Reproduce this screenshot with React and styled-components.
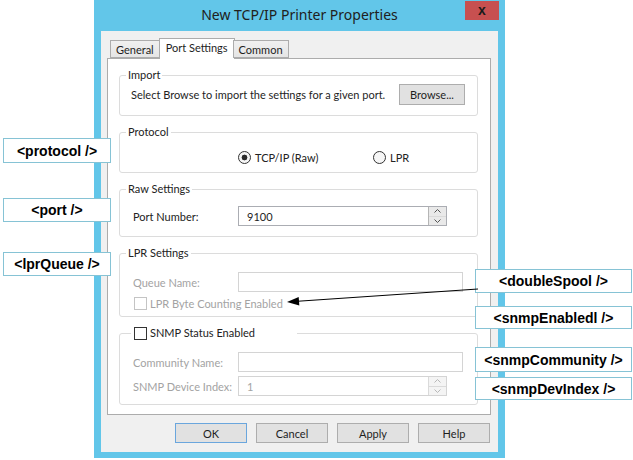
import React from 'react';
import styled, { createGlobalStyle } from 'styled-components';

const GlobalStyle = createGlobalStyle`
  html, body {
    margin: 0;
    padding: 0;
    background: #ffffff;
  }
  body {
    font-family: Lato, 'Noto Sans', sans-serif;
    font-size: 11px;
    color: #1e1e1e;
  }
`;

const Canvas = styled.div`
  position: relative;
  width: 633px;
  height: 460px;
  overflow: hidden;
`;

const Window = styled.div`
  margin-left: 94px;
  width: 411px;
  height: 458px;
  box-sizing: border-box;
  padding: 0 7px 6px;
  background: #62c6e9;
  display: flex;
  flex-direction: column;
`;

const TitleBar = styled.div`
  height: 31px;
  flex: none;
  display: grid;
  grid-template-columns: 1fr auto 1fr;
  align-items: center;
`;

const Title = styled.div`
  grid-column: 2;
  font-family: 'Noto Sans', sans-serif;
  font-size: 14px;
  color: #202020;
  margin-top: -2px;
`;

const CloseButton = styled.div`
  grid-column: 3;
  justify-self: end;
  align-self: start;
  width: 34px;
  height: 19px;
  margin: 1px -1px 0 0;
  background: #c75050;
  display: flex;
  align-items: center;
  justify-content: center;
  font-family: 'Liberation Sans', sans-serif;
  font-weight: bold;
  font-size: 14px;
  color: #1a1a1a;
  line-height: 1;
  padding-bottom: 2px;
  box-sizing: border-box;
`;

const Client = styled.div`
  flex: 1;
  background: #f0f0f0;
  display: flex;
  flex-direction: column;
`;

const TabStrip = styled.div`
  display: flex;
  align-items: flex-end;
  height: 21px;
  margin: 7px 0 -1px 9px;
  position: relative;
  z-index: 1;
`;

const Tab = styled.div`
  box-sizing: border-box;
  height: ${(p) => (p.$active ? 21 : 18)}px;
  margin: ${(p) => (p.$active ? '0 -1px 0 0' : '0 0 1px 0')};
  padding: ${(p) => (p.$active ? '2px 6px 0' : '1px 5px 0')};
  border: 1px solid #acacac;
  border-bottom: ${(p) => (p.$active ? 'none' : '1px solid #acacac')};
  background: ${(p) => (p.$active ? '#ffffff' : 'linear-gradient(#f0f0f0, #e5e5e5)')};
  display: flex;
  align-items: ${(p) => (p.$active ? 'flex-start' : 'center')};
  white-space: nowrap;
  & + & {
    margin-left: -1px;
  }
`;

const Panel = styled.div`
  margin: 0 7px 0 6px;
  height: 357px;
  box-sizing: border-box;
  border: 1px solid #acacac;
  background: #ffffff;
  padding: 8px 12px 9px 11px;
  display: flex;
  flex-direction: column;
  gap: 8px;
`;

const Group = styled.fieldset`
  margin: 0;
  min-width: 0;
  padding: ${(p) => p.$pt}px 0 ${(p) => p.$pb}px;
  border: 1px solid #dcdcdc;
  border-radius: 3px;
`;

const Legend = styled.legend`
  margin-left: ${(p) => p.$offset || 6}px;
  padding: ${(p) => p.$pad || '0 2px'};
  line-height: 16px;
  color: #222;
  display: flex;
  align-items: center;
`;

const ImportRow = styled.div`
  height: 21px;
  display: flex;
  align-items: center;
  justify-content: space-between;
  padding: 0 12px 0 11px;
  white-space: nowrap;
`;

const RadioRow = styled.div`
  height: 18px;
  display: grid;
  grid-template-columns: 135px auto;
  align-items: center;
  padding-left: 118px;
`;

const Option = styled.label`
  display: flex;
  align-items: center;
  gap: 4px;
  color: #222;
`;

const RadioDot = styled.span`
  width: 13px;
  height: 13px;
  box-sizing: border-box;
  border-radius: 50%;
  border: 1px solid #333;
  background: ${(p) =>
    p.$checked ? 'radial-gradient(circle, #2b2b2b 0 2.6px, #f6f6f6 3.2px)' : '#f6f6f6'};
`;

const FieldRow = styled.div`
  height: 20px;
  display: grid;
  grid-template-columns: 105px ${(p) => p.$width}px;
  align-items: center;
  padding-left: 13px;
  margin-top: ${(p) => p.$mt || 0}px;
  white-space: nowrap;
  color: ${(p) => (p.$disabled ? '#a3a3a3' : '#222')};
`;

const InputBox = styled.div`
  height: 20px;
  box-sizing: border-box;
  border: 1px solid ${(p) => (p.$disabled ? '#d4d4d4' : '#abadb3')};
  background: #ffffff;
  display: flex;
  align-items: stretch;
`;

const InputText = styled.span`
  flex: 1;
  padding-left: 8px;
  display: flex;
  align-items: center;
  color: ${(p) => (p.$disabled ? '#a3a3a3' : '#1e1e1e')};
`;

const Spinner = styled.div`
  width: 17px;
  display: flex;
  flex-direction: column;
  border-left: 1px solid ${(p) => (p.$disabled ? '#dadada' : '#b5b5b5')};
`;

const SpinHalf = styled.div`
  flex: 1;
  background: ${(p) => (p.$disabled ? '#f4f4f4' : '#e9e9e9')};
  display: flex;
  align-items: center;
  justify-content: center;
  & + & {
    border-top: 1px solid ${(p) => (p.$disabled ? '#dadada' : '#b5b5b5')};
  }
`;

const CheckRow = styled.label`
  height: 16px;
  margin-top: 3px;
  padding-left: 14px;
  display: flex;
  align-items: center;
  gap: 3px;
  color: ${(p) => (p.$disabled ? '#a3a3a3' : '#222')};
`;

const CheckBox = styled.span`
  width: 13px;
  height: 13px;
  box-sizing: border-box;
  border: 1px solid ${(p) => (p.$disabled ? '#c4c4c4' : '#333')};
  background: #ffffff;
`;

const Button = styled.div`
  width: ${(p) => p.$width || 72}px;
  height: ${(p) => p.$height || 20}px;
  box-sizing: border-box;
  border: 1px solid ${(p) => (p.$default ? '#6aa6dd' : '#adadad')};
  background: #e1e1e1;
  display: flex;
  align-items: center;
  justify-content: center;
  color: #1e1e1e;
`;

const ButtonBar = styled.div`
  display: flex;
  justify-content: flex-end;
  gap: 9px;
  margin: 8px 8px 0 0;
`;

const Note = styled.div`
  position: absolute;
  box-sizing: border-box;
  border: 1px solid #86c3d5;
  background: #ffffff;
  display: flex;
  align-items: center;
  justify-content: center;
  font-family: 'Liberation Sans', Arial, sans-serif;
  font-weight: bold;
  font-size: 14px;
  color: #000;
  white-space: nowrap;
`;

const Overlay = styled.svg`
  position: absolute;
  left: 0;
  top: 0;
  pointer-events: none;
`;

const notes = [
  { text: '<protocol />', x: 3, y: 138, w: 108, h: 25 },
  { text: '<port />', x: 3, y: 198, w: 108, h: 24 },
  { text: '<lprQueue />', x: 3, y: 252, w: 108, h: 24 },
  { text: '<doubleSpool />', x: 475, y: 269, w: 157, h: 24 },
  { text: '<snmpEnabledl />', x: 475, y: 306, w: 157, h: 23 },
  { text: '<snmpCommunity />', x: 475, y: 347, w: 157, h: 25 },
  { text: '<snmpDevIndex />', x: 475, y: 377, w: 157, h: 23 },
];

function Chevron({ up, disabled }) {
  return (
    <svg width="7" height="4" viewBox="0 0 7 4">
      <path
        d={up ? 'M0.5 3.5 L3.5 0.5 L6.5 3.5' : 'M0.5 0.5 L3.5 3.5 L6.5 0.5'}
        fill="none"
        stroke={disabled ? '#b8b8b8' : '#555'}
        strokeWidth="1"
      />
    </svg>
  );
}

function SpinInput({ value, disabled }) {
  return (
    <InputBox $disabled={disabled}>
      <InputText $disabled={disabled}>{value}</InputText>
      <Spinner $disabled={disabled}>
        <SpinHalf $disabled={disabled}>
          <Chevron up disabled={disabled} />
        </SpinHalf>
        <SpinHalf $disabled={disabled}>
          <Chevron disabled={disabled} />
        </SpinHalf>
      </Spinner>
    </InputBox>
  );
}

export default function App() {
  return (
    <Canvas>
      <GlobalStyle />
      <Window>
        <TitleBar>
          <Title>New TCP/IP Printer Properties</Title>
          <CloseButton>x</CloseButton>
        </TitleBar>
        <Client>
          <TabStrip>
            <Tab>General</Tab>
            <Tab $active>Port Settings</Tab>
            <Tab>Common</Tab>
          </TabStrip>
          <Panel>
            <Group $pt={1} $pb={10}>
              <Legend>Import</Legend>
              <ImportRow>
                <span>Select Browse to import the settings for a given port.</span>
                <Button $width={66} $height={21}>Browse...</Button>
              </ImportRow>
            </Group>

            <Group $pt={8} $pb={6}>
              <Legend>Protocol</Legend>
              <RadioRow>
                <Option>
                  <RadioDot $checked />
                  TCP/IP (Raw)
                </Option>
                <Option>
                  <RadioDot />
                  LPR
                </Option>
              </RadioRow>
            </Group>

            <Group $pt={9} $pb={10}>
              <Legend>Raw Settings</Legend>
              <FieldRow $width={209}>
                <span>Port Number:</span>
                <SpinInput value="9100" />
              </FieldRow>
            </Group>

            <Group $pt={11} $pb={5}>
              <Legend>LPR Settings</Legend>
              <FieldRow $width={225} $disabled>
                <span>Queue Name:</span>
                <InputBox $disabled />
              </FieldRow>
              <CheckRow $disabled>
                <CheckBox $disabled />
                LPR Byte Counting Enabled
              </CheckRow>
            </Group>

            <Group $pt={11} $pb={8}>
              <Legend $offset={11} $pad="0 42px 0 3px">
                <CheckBox />
                <span style={{ marginLeft: 3 }}>SNMP Status Enabled</span>
              </Legend>
              <FieldRow $width={225} $disabled>
                <span>Community Name:</span>
                <InputBox $disabled />
              </FieldRow>
              <FieldRow $width={209} $disabled $mt={4}>
                <span>SNMP Device Index:</span>
                <SpinInput value="1" disabled />
              </FieldRow>
            </Group>
          </Panel>
          <ButtonBar>
            <Button $default>OK</Button>
            <Button>Cancel</Button>
            <Button>Apply</Button>
            <Button>Help</Button>
          </ButtonBar>
        </Client>
      </Window>

      {notes.map((n) => (
        <Note key={n.text} style={{ left: n.x, top: n.y, width: n.w, height: n.h }}>
          {n.text}
        </Note>
      ))}

      <Overlay width="633" height="460" viewBox="0 0 633 460">
        <line x1="478" y1="289" x2="297" y2="301.3" stroke="#000" strokeWidth="1" />
        <polygon points="287,302 298.7,297 299.3,305.4" fill="#000" />
      </Overlay>
    </Canvas>
  );
}
